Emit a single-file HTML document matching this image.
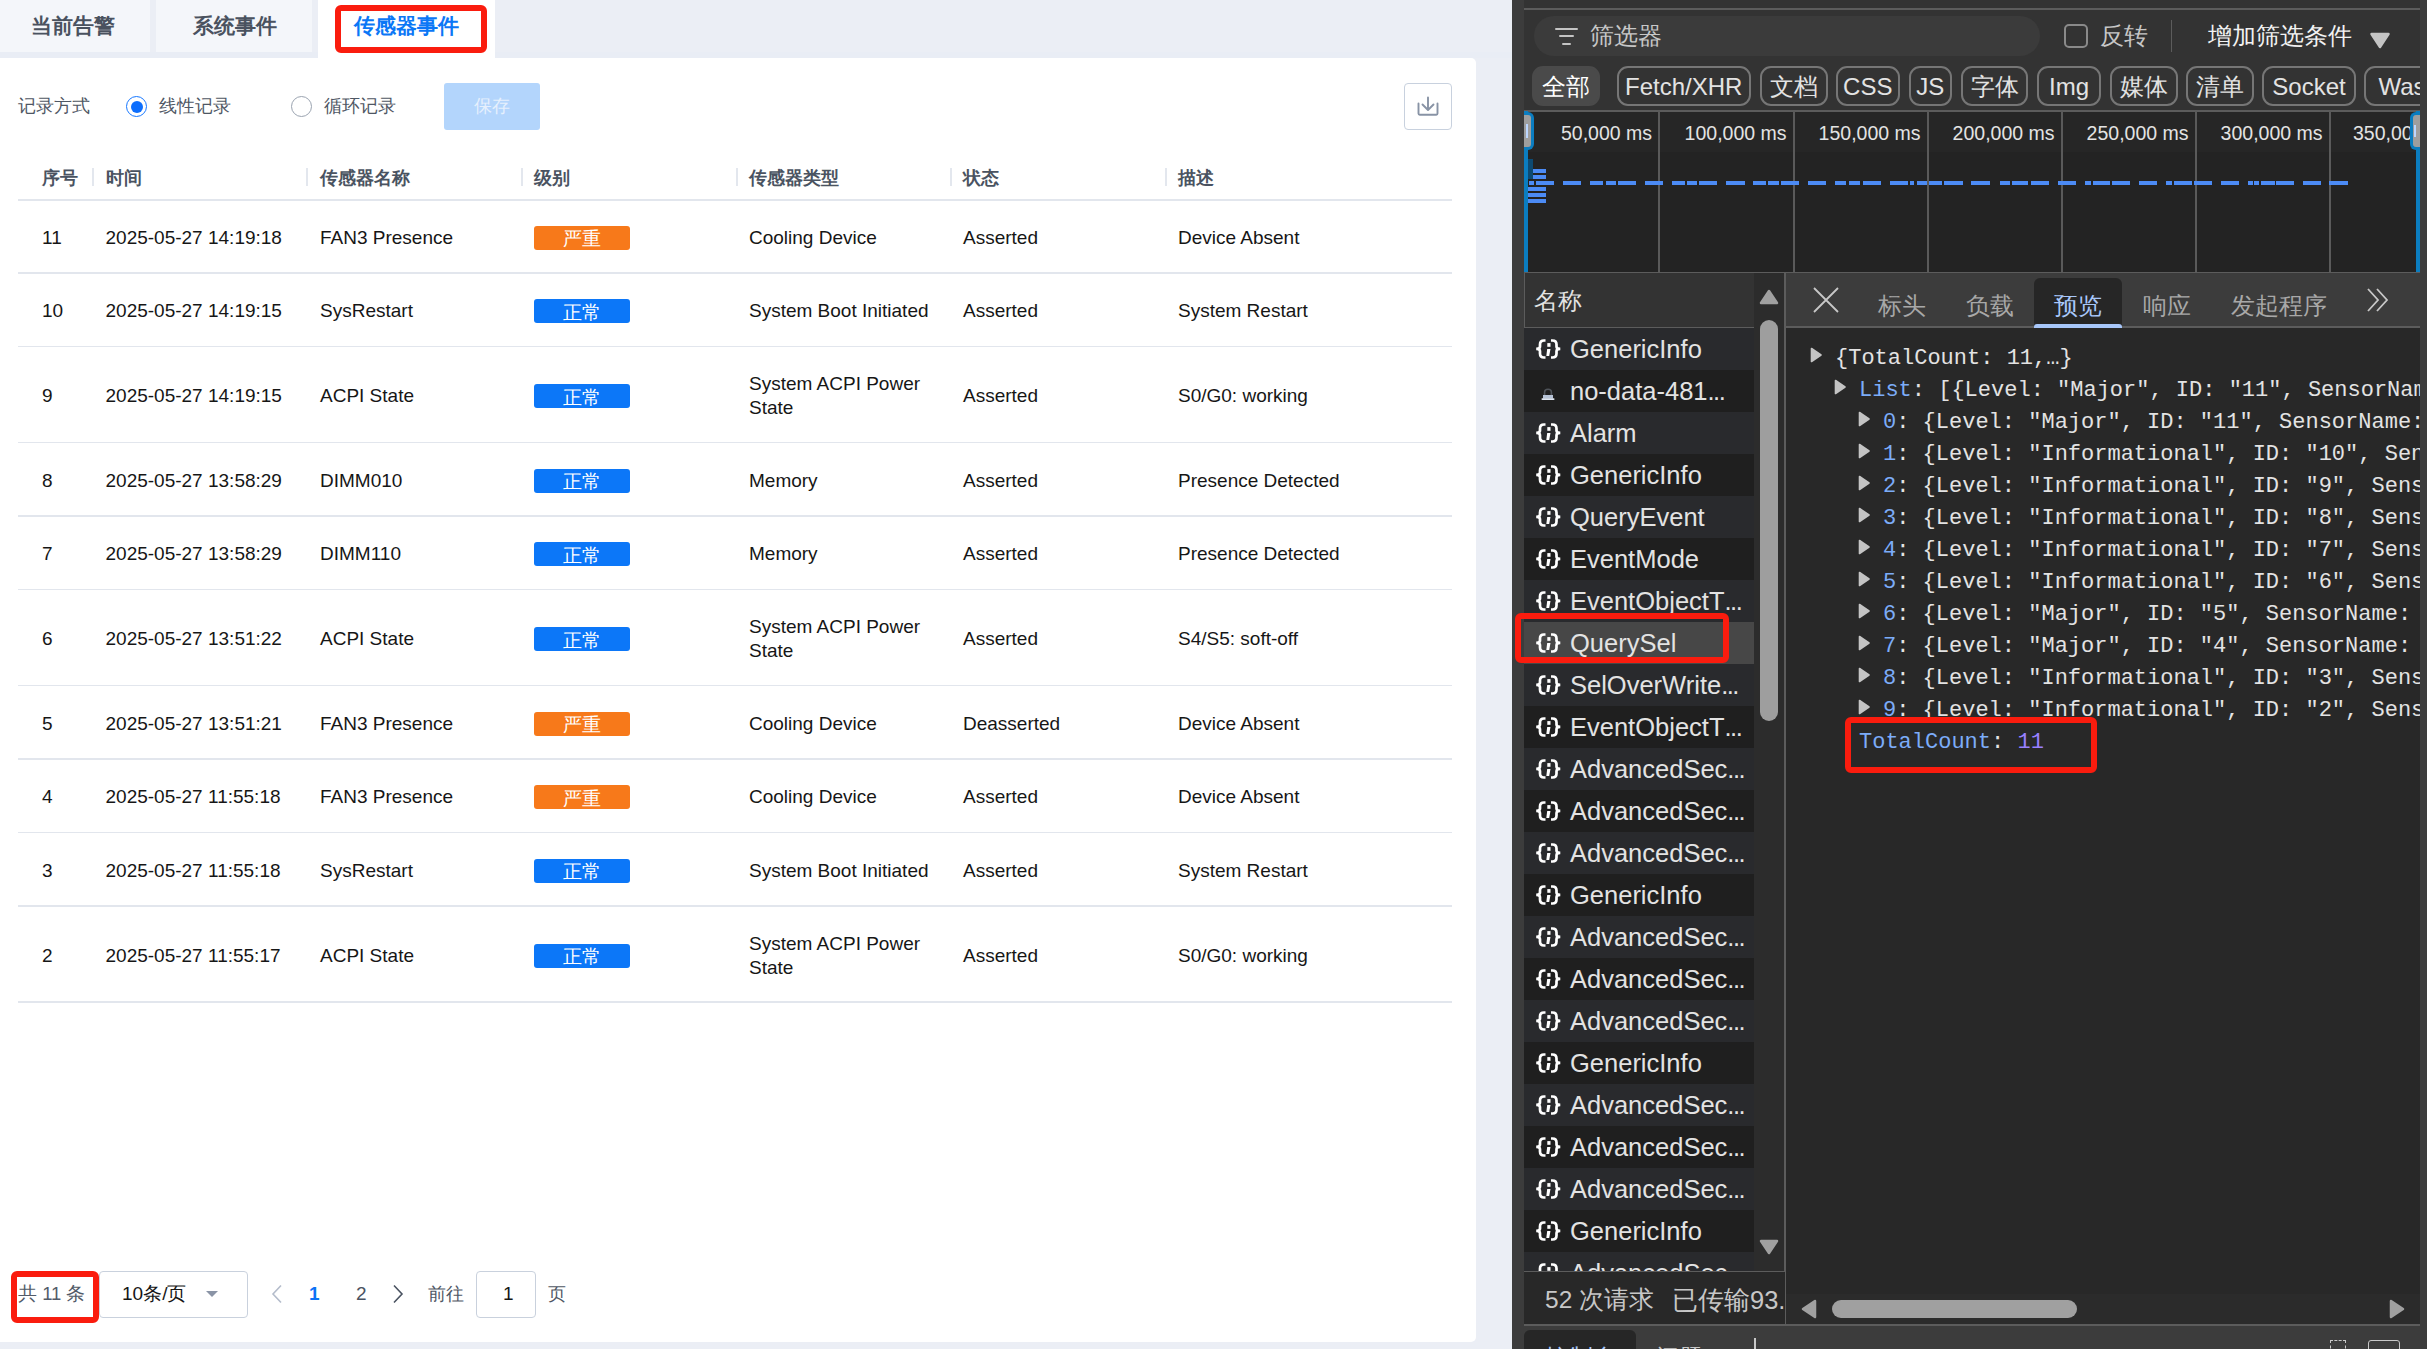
<!DOCTYPE html>
<html><head><meta charset="utf-8">
<style>
*{box-sizing:border-box;margin:0;padding:0}
html,body{width:2427px;height:1349px;overflow:hidden;background:#ebeef5;font-family:"Liberation Sans",sans-serif}
.a{position:absolute;white-space:nowrap}
#left{position:absolute;left:0;top:0;width:1512px;height:1349px;background:#ebeef5;overflow:hidden}
.tab{position:absolute;top:0;height:52px;background:#f4f6fa}
.tt{position:absolute;top:0;font-size:21px;font-weight:bold;color:#4a525f;line-height:52px;white-space:nowrap}
.card{position:absolute;left:0;top:58px;width:1476px;height:1284px;background:#fff;border-radius:0 5px 5px 0}
.redbox{position:absolute;border:6px solid #fa1c0e;border-radius:6px}
.th{position:absolute;top:162.5px;font-size:17.5px;font-weight:bold;color:#4a5361;line-height:30px;white-space:nowrap}
.sep{position:absolute;top:168px;width:2px;height:18px;background:#e3e7ee}
.hl{position:absolute;left:18px;width:1434px;height:1.5px;background:#e2e6ed}
.td{position:absolute;font-size:19px;color:#161616;line-height:24px;white-space:nowrap}
.badge{position:absolute;left:534px;width:96px;height:24px;border-radius:3px;color:#fff;font-size:19px;line-height:24px;text-align:center}
.or{background:#f7791a}.bl{background:#0c77f8}
#dev{position:absolute;left:1512px;top:0;width:915px;height:1349px;background:#3c3c3c;overflow:hidden}
.d{position:absolute;white-space:nowrap}
.chip{position:absolute;top:66px;height:40px;border:2px solid #767676;border-radius:11px;color:#e3e3e3;font-size:24px;line-height:37px;text-align:center;white-space:nowrap}
.gl{position:absolute;top:111px;width:2px;height:161px;background:#5a5a5a}
.rl{position:absolute;top:120.5px;font-size:19.5px;color:#e3e3e3;line-height:24px;white-space:nowrap;text-align:right}
.nr{position:absolute;left:12px;width:230px;height:42px;color:#e3e3e3;font-size:25.5px;line-height:42px;white-space:nowrap}
.ic{position:absolute;left:10px;top:0;font-family:"Liberation Mono",monospace;font-weight:bold;font-size:22px;color:#fff;letter-spacing:-3px}
.nt{position:absolute;left:46px;top:0}
.jl{position:absolute;font-family:"Liberation Mono",monospace;font-size:22px;color:#e3e3e3;line-height:32px;white-space:nowrap}
.tri{position:absolute;width:14px;height:18px}
.k{color:#7cacf8}.p{color:#9980ff}
</style></head><body>
<div id="left">
<div class="tab" style="left:0;width:150px"><span class="tt" style="left:31px">当前告警</span></div>
<div class="tab" style="left:156px;width:156px"><span class="tt" style="left:37px">系统事件</span></div>
<div class="a" style="left:0;top:52px;width:1512px;height:6px;background:#e9edf5"></div>
<div class="a" style="left:318px;top:0;width:177px;height:60px;background:#fff"></div>
<div class="card"></div>
<span class="tt" style="left:354px;color:#0b77f6">传感器事件</span>
<div class="redbox" style="left:335px;top:5px;width:152px;height:48px"></div>
<span class="a" style="left:18px;top:94px;font-size:17.5px;line-height:24px;color:#4f5764">记录方式</span>
<div class="a" style="left:126px;top:96px;width:21px;height:21px;border:1.5px solid #1677ff;border-radius:50%"></div>
<div class="a" style="left:130.5px;top:100.5px;width:12px;height:12px;background:#0d6efd;border-radius:50%"></div>
<span class="a" style="left:159px;top:94px;font-size:17.5px;line-height:24px;color:#4f5764">线性记录</span>
<div class="a" style="left:291px;top:96px;width:21px;height:21px;border:1.5px solid #9aa3b0;border-radius:50%"></div>
<span class="a" style="left:324px;top:94px;font-size:17.5px;line-height:24px;color:#4f5764">循环记录</span>
<div class="a" style="left:444px;top:83px;width:96px;height:47px;background:#b3d5fc;border-radius:3px"></div>
<span class="a" style="left:474px;top:94px;font-size:17.5px;line-height:24px;color:#e6f0fd">保存</span>
<div class="a" style="left:1404px;top:83px;width:48px;height:47px;border:1.5px solid #c8d1de;border-radius:4px"></div>
<svg class="a" style="left:1412px;top:92px" width="32" height="30" viewBox="0 0 32 30"><path d="M16 5.5V17.5M10.5 12.5L16 18L21.5 12.5" stroke="#8893a5" stroke-width="1.9" fill="none" stroke-linecap="round" stroke-linejoin="round"/><path d="M6.5 11.5V21.5Q6.5 22.7 7.7 22.7H24.3Q25.5 22.7 25.5 21.5V11.5" stroke="#8893a5" stroke-width="1.9" fill="none" stroke-linecap="round"/></svg>
<span class="th" style="left:42px">序号</span>
<span class="th" style="left:105.5px">时间</span>
<span class="th" style="left:320px">传感器名称</span>
<span class="th" style="left:534px">级别</span>
<span class="th" style="left:749px">传感器类型</span>
<span class="th" style="left:963px">状态</span>
<span class="th" style="left:1178px">描述</span>
<div class="sep" style="left:92px"></div>
<div class="sep" style="left:306px"></div>
<div class="sep" style="left:521px"></div>
<div class="sep" style="left:736px"></div>
<div class="sep" style="left:950px"></div>
<div class="sep" style="left:1165px"></div>
<div class="hl" style="top:199px"></div>
<span class="td" style="left:42px;top:225.8px">11</span>
<span class="td" style="left:105.5px;top:225.8px">2025-05-27 14:19:18</span>
<span class="td" style="left:320px;top:225.8px">FAN3 Presence</span>
<span class="td" style="left:963px;top:225.8px">Asserted</span>
<span class="td" style="left:1178px;top:225.8px">Device Absent</span>
<span class="td" style="left:749px;top:225.8px">Cooling Device</span>
<div class="badge or" style="top:225.8px"><span style="position:relative;top:1.5px">严重</span></div>
<div class="hl" style="top:272.0px"></div>
<span class="td" style="left:42px;top:299.2px">10</span>
<span class="td" style="left:105.5px;top:299.2px">2025-05-27 14:19:15</span>
<span class="td" style="left:320px;top:299.2px">SysRestart</span>
<span class="td" style="left:963px;top:299.2px">Asserted</span>
<span class="td" style="left:1178px;top:299.2px">System Restart</span>
<span class="td" style="left:749px;top:299.2px">System Boot Initiated</span>
<div class="badge bl" style="top:299.2px"><span style="position:relative;top:1.5px">正常</span></div>
<div class="hl" style="top:345.5px"></div>
<span class="td" style="left:42px;top:384.0px">9</span>
<span class="td" style="left:105.5px;top:384.0px">2025-05-27 14:19:15</span>
<span class="td" style="left:320px;top:384.0px">ACPI State</span>
<span class="td" style="left:963px;top:384.0px">Asserted</span>
<span class="td" style="left:1178px;top:384.0px">S0/G0: working</span>
<span class="td" style="left:749px;top:372.0px">System ACPI Power<br>State</span>
<div class="badge bl" style="top:384.0px"><span style="position:relative;top:1.5px">正常</span></div>
<div class="hl" style="top:441.5px"></div>
<span class="td" style="left:42px;top:468.8px">8</span>
<span class="td" style="left:105.5px;top:468.8px">2025-05-27 13:58:29</span>
<span class="td" style="left:320px;top:468.8px">DIMM010</span>
<span class="td" style="left:963px;top:468.8px">Asserted</span>
<span class="td" style="left:1178px;top:468.8px">Presence Detected</span>
<span class="td" style="left:749px;top:468.8px">Memory</span>
<div class="badge bl" style="top:468.8px"><span style="position:relative;top:1.5px">正常</span></div>
<div class="hl" style="top:515.0px"></div>
<span class="td" style="left:42px;top:542.2px">7</span>
<span class="td" style="left:105.5px;top:542.2px">2025-05-27 13:58:29</span>
<span class="td" style="left:320px;top:542.2px">DIMM110</span>
<span class="td" style="left:963px;top:542.2px">Asserted</span>
<span class="td" style="left:1178px;top:542.2px">Presence Detected</span>
<span class="td" style="left:749px;top:542.2px">Memory</span>
<div class="badge bl" style="top:542.2px"><span style="position:relative;top:1.5px">正常</span></div>
<div class="hl" style="top:588.5px"></div>
<span class="td" style="left:42px;top:627.0px">6</span>
<span class="td" style="left:105.5px;top:627.0px">2025-05-27 13:51:22</span>
<span class="td" style="left:320px;top:627.0px">ACPI State</span>
<span class="td" style="left:963px;top:627.0px">Asserted</span>
<span class="td" style="left:1178px;top:627.0px">S4/S5: soft-off</span>
<span class="td" style="left:749px;top:615.0px">System ACPI Power<br>State</span>
<div class="badge bl" style="top:627.0px"><span style="position:relative;top:1.5px">正常</span></div>
<div class="hl" style="top:684.5px"></div>
<span class="td" style="left:42px;top:711.8px">5</span>
<span class="td" style="left:105.5px;top:711.8px">2025-05-27 13:51:21</span>
<span class="td" style="left:320px;top:711.8px">FAN3 Presence</span>
<span class="td" style="left:963px;top:711.8px">Deasserted</span>
<span class="td" style="left:1178px;top:711.8px">Device Absent</span>
<span class="td" style="left:749px;top:711.8px">Cooling Device</span>
<div class="badge or" style="top:711.8px"><span style="position:relative;top:1.5px">严重</span></div>
<div class="hl" style="top:758.0px"></div>
<span class="td" style="left:42px;top:785.2px">4</span>
<span class="td" style="left:105.5px;top:785.2px">2025-05-27 11:55:18</span>
<span class="td" style="left:320px;top:785.2px">FAN3 Presence</span>
<span class="td" style="left:963px;top:785.2px">Asserted</span>
<span class="td" style="left:1178px;top:785.2px">Device Absent</span>
<span class="td" style="left:749px;top:785.2px">Cooling Device</span>
<div class="badge or" style="top:785.2px"><span style="position:relative;top:1.5px">严重</span></div>
<div class="hl" style="top:831.5px"></div>
<span class="td" style="left:42px;top:858.8px">3</span>
<span class="td" style="left:105.5px;top:858.8px">2025-05-27 11:55:18</span>
<span class="td" style="left:320px;top:858.8px">SysRestart</span>
<span class="td" style="left:963px;top:858.8px">Asserted</span>
<span class="td" style="left:1178px;top:858.8px">System Restart</span>
<span class="td" style="left:749px;top:858.8px">System Boot Initiated</span>
<div class="badge bl" style="top:858.8px"><span style="position:relative;top:1.5px">正常</span></div>
<div class="hl" style="top:905.0px"></div>
<span class="td" style="left:42px;top:943.5px">2</span>
<span class="td" style="left:105.5px;top:943.5px">2025-05-27 11:55:17</span>
<span class="td" style="left:320px;top:943.5px">ACPI State</span>
<span class="td" style="left:963px;top:943.5px">Asserted</span>
<span class="td" style="left:1178px;top:943.5px">S0/G0: working</span>
<span class="td" style="left:749px;top:931.5px">System ACPI Power<br>State</span>
<div class="badge bl" style="top:943.5px"><span style="position:relative;top:1.5px">正常</span></div>
<div class="hl" style="top:1001.0px"></div>
<span class="a" style="left:18px;top:1282px;font-size:18.5px;line-height:24px;color:#525b68">共 11 条</span>
<div class="a" style="left:99px;top:1270.5px;width:149px;height:47px;border:1.5px solid #c9d1dd;border-radius:4px"></div>
<span class="a" style="left:122px;top:1282px;font-size:19px;line-height:24px;color:#161616">10条/页</span>
<div class="a" style="left:206px;top:1291px;width:0;height:0;border-left:6px solid transparent;border-right:6px solid transparent;border-top:6px solid #8a94a6"></div>
<svg class="a" style="left:270px;top:1284px" width="14" height="20"><path d="M11 1.5L3 10L11 18.5" stroke="#b4bccb" stroke-width="1.6" fill="none"/></svg>
<span class="a" style="left:309px;top:1282px;font-size:19px;line-height:24px;color:#0b72f5;font-weight:bold">1</span>
<span class="a" style="left:356px;top:1282px;font-size:19px;line-height:24px;color:#4a5361">2</span>
<svg class="a" style="left:391px;top:1284px" width="14" height="20"><path d="M3 1.5L11 10L3 18.5" stroke="#4a5361" stroke-width="1.6" fill="none"/></svg>
<span class="a" style="left:428px;top:1282px;font-size:17.5px;line-height:24px;color:#4f5764">前往</span>
<div class="a" style="left:476px;top:1270.5px;width:60px;height:47px;border:1.5px solid #c9d1dd;border-radius:4px"></div>
<span class="a" style="left:503px;top:1282px;font-size:19px;line-height:24px;color:#161616">1</span>
<span class="a" style="left:548px;top:1282px;font-size:17.5px;line-height:24px;color:#4f5764">页</span>
<div class="redbox" style="left:11px;top:1271px;width:88px;height:52px"></div>
</div>
<div id="dev">
<div class="d" style="left:12px;top:0;width:896px;height:110px;background:#333333"></div>
<div class="d" style="left:12px;top:8px;width:896px;height:2px;background:#5c5c5c"></div>
<div class="d" style="left:22px;top:16px;width:506px;height:40px;background:#3b3b3b;border-radius:20px"></div>
<div class="d" style="left:43px;top:27.5px;width:22.5px;height:2px;background:#c4c4c4;border-radius:1px"></div>
<div class="d" style="left:46.5px;top:35px;width:15.5px;height:2px;background:#c4c4c4;border-radius:1px"></div>
<div class="d" style="left:49.5px;top:42.5px;width:9.5px;height:2px;background:#c4c4c4;border-radius:1px"></div>
<span class="d" style="left:78px;top:22px;font-size:24px;line-height:28px;color:#c7c7c7">筛选器</span>
<div class="d" style="left:552px;top:24px;width:24px;height:24px;border:2px solid #8a8a8a;border-radius:5px"></div>
<span class="d" style="left:588px;top:22px;font-size:24px;line-height:28px;color:#c7c7c7">反转</span>
<div class="d" style="left:658.5px;top:20px;width:1.5px;height:32px;background:#5c5c5c"></div>
<span class="d" style="left:696px;top:22px;font-size:24px;line-height:28px;color:#f2f2f2">增加筛选条件</span>
<svg class="d" style="left:856px;top:31px" width="24" height="19" viewBox="0 0 24 19"><path d="M3.5 3H20.5L12 16Z" fill="#c4c4c4" stroke="#c4c4c4" stroke-width="2.5" stroke-linejoin="round"/></svg>
<div class="chip" style="left:20px;width:68px;background:#4a4a4a;border-color:#4a4a4a;color:#fff">全部</div>
<div class="chip" style="left:104.5px;width:134.5px">Fetch/XHR</div>
<div class="chip" style="left:248px;width:67.5px">文档</div>
<div class="chip" style="left:324px;width:63.5px">CSS</div>
<div class="chip" style="left:396.5px;width:43.5px">JS</div>
<div class="chip" style="left:449px;width:67px">字体</div>
<div class="chip" style="left:525px;width:64px">Img</div>
<div class="chip" style="left:598px;width:67.5px">媒体</div>
<div class="chip" style="left:674px;width:67.5px">清单</div>
<div class="chip" style="left:750px;width:94px">Socket</div>
<div class="chip" style="left:852px;width:96px">Wasm</div>
<div class="d" style="left:908px;top:0;width:7px;height:1349px;background:#3c3c3c;z-index:5"></div>
<div class="d" style="left:12px;top:109.5px;width:896px;height:2px;background:#5c5c5c"></div>
<div class="d" style="left:12px;top:111.5px;width:896px;height:40.5px;background:#262626"></div>
<div class="d" style="left:12px;top:152px;width:896px;height:120px;background:#232323"></div>
<div class="d" style="left:12px;top:271.5px;width:896px;height:2px;background:#5c5c5c"></div>
<div class="gl" style="left:146px"></div>
<span class="rl" style="left:-54px;width:194px">50,000 ms</span>
<div class="gl" style="left:280.5px"></div>
<span class="rl" style="left:80.5px;width:194px">100,000 ms</span>
<div class="gl" style="left:414.5px"></div>
<span class="rl" style="left:214.5px;width:194px">150,000 ms</span>
<div class="gl" style="left:548.5px"></div>
<span class="rl" style="left:348.5px;width:194px">200,000 ms</span>
<div class="gl" style="left:682.5px"></div>
<span class="rl" style="left:482.5px;width:194px">250,000 ms</span>
<div class="gl" style="left:816.5px"></div>
<span class="rl" style="left:616.5px;width:194px">300,000 ms</span>
<span class="rl" style="left:841px">350,000 ms</span>
<div class="d" style="left:16.5px;top:181px;width:5.7px;height:4px;background:#4c8bf5"></div>
<div class="d" style="left:24.1px;top:181px;width:18.0px;height:4px;background:#4c8bf5"></div>
<div class="d" style="left:50.6px;top:181px;width:18.6px;height:4px;background:#4c8bf5"></div>
<div class="d" style="left:78.1px;top:181px;width:13.3px;height:4px;background:#4c8bf5"></div>
<div class="d" style="left:93.9px;top:181px;width:9.8px;height:4px;background:#4c8bf5"></div>
<div class="d" style="left:105.6px;top:181px;width:18.0px;height:4px;background:#4c8bf5"></div>
<div class="d" style="left:132.5px;top:181px;width:18.6px;height:4px;background:#4c8bf5"></div>
<div class="d" style="left:160.0px;top:181px;width:12.5px;height:4px;background:#4c8bf5"></div>
<div class="d" style="left:174.8px;top:181px;width:10.4px;height:4px;background:#4c8bf5"></div>
<div class="d" style="left:187.1px;top:181px;width:18.4px;height:4px;background:#4c8bf5"></div>
<div class="d" style="left:214.0px;top:181px;width:18.6px;height:4px;background:#4c8bf5"></div>
<div class="d" style="left:241.1px;top:181px;width:12.7px;height:4px;background:#4c8bf5"></div>
<div class="d" style="left:255.9px;top:181px;width:10.8px;height:4px;background:#4c8bf5"></div>
<div class="d" style="left:268.6px;top:181px;width:18.4px;height:4px;background:#4c8bf5"></div>
<div class="d" style="left:295.5px;top:181px;width:18.6px;height:4px;background:#4c8bf5"></div>
<div class="d" style="left:323.0px;top:181px;width:11.4px;height:4px;background:#4c8bf5"></div>
<div class="d" style="left:336.8px;top:181px;width:11.4px;height:4px;background:#4c8bf5"></div>
<div class="d" style="left:350.7px;top:181px;width:18.4px;height:4px;background:#4c8bf5"></div>
<div class="d" style="left:377.6px;top:181px;width:18.0px;height:4px;background:#4c8bf5"></div>
<div class="d" style="left:397.5px;top:181px;width:4.7px;height:4px;background:#4c8bf5"></div>
<div class="d" style="left:404.7px;top:181px;width:10.8px;height:4px;background:#4c8bf5"></div>
<div class="d" style="left:417.4px;top:181px;width:12.9px;height:4px;background:#4c8bf5"></div>
<div class="d" style="left:432.2px;top:181px;width:18.4px;height:4px;background:#4c8bf5"></div>
<div class="d" style="left:459.0px;top:181px;width:18.8px;height:4px;background:#4c8bf5"></div>
<div class="d" style="left:488.4px;top:181px;width:9.2px;height:4px;background:#4c8bf5"></div>
<div class="d" style="left:500.0px;top:181px;width:16.3px;height:4px;background:#4c8bf5"></div>
<div class="d" style="left:518.8px;top:181px;width:18.1px;height:4px;background:#4c8bf5"></div>
<div class="d" style="left:545.7px;top:181px;width:18.3px;height:4px;background:#4c8bf5"></div>
<div class="d" style="left:572.7px;top:181px;width:6.1px;height:4px;background:#4c8bf5"></div>
<div class="d" style="left:580.8px;top:181px;width:17.3px;height:4px;background:#4c8bf5"></div>
<div class="d" style="left:600.0px;top:181px;width:18.3px;height:4px;background:#4c8bf5"></div>
<div class="d" style="left:627.0px;top:181px;width:18.2px;height:4px;background:#4c8bf5"></div>
<div class="d" style="left:654.3px;top:181px;width:5.4px;height:4px;background:#4c8bf5"></div>
<div class="d" style="left:661.6px;top:181px;width:18.3px;height:4px;background:#4c8bf5"></div>
<div class="d" style="left:681.8px;top:181px;width:18.3px;height:4px;background:#4c8bf5"></div>
<div class="d" style="left:708.7px;top:181px;width:18.3px;height:4px;background:#4c8bf5"></div>
<div class="d" style="left:736.0px;top:181px;width:4.5px;height:4px;background:#4c8bf5"></div>
<div class="d" style="left:742.4px;top:181px;width:4.4px;height:4px;background:#4c8bf5"></div>
<div class="d" style="left:748.6px;top:181px;width:14.0px;height:4px;background:#4c8bf5"></div>
<div class="d" style="left:764.1px;top:181px;width:17.7px;height:4px;background:#4c8bf5"></div>
<div class="d" style="left:790.5px;top:181px;width:18.3px;height:4px;background:#4c8bf5"></div>
<div class="d" style="left:817.4px;top:181px;width:18.9px;height:4px;background:#4c8bf5"></div>
<div class="d" style="left:16px;top:159px;width:5px;height:20px;background:#0d4a72"></div>
<div class="d" style="left:21px;top:169px;width:13.2px;height:4px;background:#4c8bf5"></div>
<div class="d" style="left:21px;top:174.7px;width:13.2px;height:4px;background:#4c8bf5"></div>
<div class="d" style="left:16px;top:187.4px;width:18.2px;height:4px;background:#4c8bf5"></div>
<div class="d" style="left:16px;top:193.1px;width:18.2px;height:4px;background:#4c8bf5"></div>
<div class="d" style="left:16px;top:198.8px;width:18.2px;height:4px;background:#4c8bf5"></div>
<div class="d" style="left:12px;top:111px;width:4px;height:161px;background:#0b7dc0"></div>
<div class="d" style="left:904px;top:111px;width:4px;height:161px;background:#0b7dc0"></div>
<div class="d" style="left:12px;top:112px;width:10px;height:38px;background:#9e9e9e;border:3px solid #0b7dc0;border-left:0;border-radius:0 6px 6px 0"></div>
<div class="d" style="left:14px;top:124px;width:2px;height:14px;background:#bcd6ff"></div>
<div class="d" style="left:898px;top:112px;width:10px;height:38px;background:#9e9e9e;border:3px solid #0b7dc0;border-right:0;border-radius:6px 0 0 6px;z-index:6"></div>
<div class="d" style="left:902px;top:125px;width:2px;height:12px;background:#bcd6ff;z-index:6"></div>
<div class="d" style="left:12px;top:273px;width:896px;height:1052px;background:#282828"></div>
<div class="d" style="left:12px;top:273px;width:230px;height:55px;background:#333;border-left:1.5px solid #5c5c5c;border-bottom:1.5px solid #5c5c5c"></div>
<span class="d" style="left:22px;top:287px;font-size:24px;line-height:28px;color:#e3e3e3">名称</span>
<div class="d" style="left:242px;top:273px;width:31px;height:998px;background:#2c2c2c"></div>
<svg class="d" style="left:246px;top:288px" width="22" height="18" viewBox="0 0 22 18"><path d="M3 15L11 3L19 15Z" fill="#a0a0a0" stroke="#a0a0a0" stroke-width="2.5" stroke-linejoin="round"/></svg>
<div class="d" style="left:247.5px;top:319.5px;width:18.5px;height:401px;background:#9e9e9e;border-radius:9px"></div>
<svg class="d" style="left:246px;top:1238px" width="22" height="18" viewBox="0 0 22 18"><path d="M3 3L19 3L11 15Z" fill="#a0a0a0" stroke="#a0a0a0" stroke-width="2.5" stroke-linejoin="round"/></svg>
<div class="d" style="left:272px;top:273px;width:2px;height:1052px;background:#5c5c5c"></div>
<div class="d" style="left:12px;top:328px;width:230px;height:943px;overflow:hidden">
<div class="nr" style="left:0;top:0px;width:230px;background:#292a2d"><svg style="position:absolute;left:10.5px;top:10px" width="27" height="22" viewBox="0 0 27 22"><path d="M10.5 2.5H9Q5 2.5 5 6.5V8.5Q5 10.9 1.2 10.9Q5 10.9 5 13.3V15.5Q5 19.5 9 19.5H10.5M16 2.5H17.5Q21.5 2.5 21.5 6.5V8.5Q21.5 10.9 25.3 10.9Q21.5 10.9 21.5 13.3V15.5Q21.5 19.5 17.5 19.5H16" stroke="#fff" stroke-width="2.7" fill="none"/><rect x="12.3" y="5.1" width="3.2" height="3.7" fill="#fff"/><path d="M12.2 11.1H15.5L14.2 18H11.3Z" fill="#fff"/></svg><span class="nt">GenericInfo</span></div>
<div class="nr" style="left:0;top:42px;width:230px;background:#1f1f1f"><svg style="position:absolute;left:17px;top:18px" width="14" height="13" viewBox="0 0 14 13"><path d="M3.6 8V4Q3.6 1.3 7 1.3Q10.4 1.3 10.4 4V8" stroke="#4f5359" stroke-width="1.6" fill="none"/><rect x="2" y="7" width="10" height="3.6" fill="#b6c2d6"/><rect x="0.5" y="10.3" width="13" height="1.8" rx="0.8" fill="#dfe6f1"/></svg><span class="nt">no-data-481<span style="letter-spacing:-1.5px">...</span></span></div>
<div class="nr" style="left:0;top:84px;width:230px;background:#292a2d"><svg style="position:absolute;left:10.5px;top:10px" width="27" height="22" viewBox="0 0 27 22"><path d="M10.5 2.5H9Q5 2.5 5 6.5V8.5Q5 10.9 1.2 10.9Q5 10.9 5 13.3V15.5Q5 19.5 9 19.5H10.5M16 2.5H17.5Q21.5 2.5 21.5 6.5V8.5Q21.5 10.9 25.3 10.9Q21.5 10.9 21.5 13.3V15.5Q21.5 19.5 17.5 19.5H16" stroke="#fff" stroke-width="2.7" fill="none"/><rect x="12.3" y="5.1" width="3.2" height="3.7" fill="#fff"/><path d="M12.2 11.1H15.5L14.2 18H11.3Z" fill="#fff"/></svg><span class="nt">Alarm</span></div>
<div class="nr" style="left:0;top:126px;width:230px;background:#1f1f1f"><svg style="position:absolute;left:10.5px;top:10px" width="27" height="22" viewBox="0 0 27 22"><path d="M10.5 2.5H9Q5 2.5 5 6.5V8.5Q5 10.9 1.2 10.9Q5 10.9 5 13.3V15.5Q5 19.5 9 19.5H10.5M16 2.5H17.5Q21.5 2.5 21.5 6.5V8.5Q21.5 10.9 25.3 10.9Q21.5 10.9 21.5 13.3V15.5Q21.5 19.5 17.5 19.5H16" stroke="#fff" stroke-width="2.7" fill="none"/><rect x="12.3" y="5.1" width="3.2" height="3.7" fill="#fff"/><path d="M12.2 11.1H15.5L14.2 18H11.3Z" fill="#fff"/></svg><span class="nt">GenericInfo</span></div>
<div class="nr" style="left:0;top:168px;width:230px;background:#292a2d"><svg style="position:absolute;left:10.5px;top:10px" width="27" height="22" viewBox="0 0 27 22"><path d="M10.5 2.5H9Q5 2.5 5 6.5V8.5Q5 10.9 1.2 10.9Q5 10.9 5 13.3V15.5Q5 19.5 9 19.5H10.5M16 2.5H17.5Q21.5 2.5 21.5 6.5V8.5Q21.5 10.9 25.3 10.9Q21.5 10.9 21.5 13.3V15.5Q21.5 19.5 17.5 19.5H16" stroke="#fff" stroke-width="2.7" fill="none"/><rect x="12.3" y="5.1" width="3.2" height="3.7" fill="#fff"/><path d="M12.2 11.1H15.5L14.2 18H11.3Z" fill="#fff"/></svg><span class="nt">QueryEvent</span></div>
<div class="nr" style="left:0;top:210px;width:230px;background:#1f1f1f"><svg style="position:absolute;left:10.5px;top:10px" width="27" height="22" viewBox="0 0 27 22"><path d="M10.5 2.5H9Q5 2.5 5 6.5V8.5Q5 10.9 1.2 10.9Q5 10.9 5 13.3V15.5Q5 19.5 9 19.5H10.5M16 2.5H17.5Q21.5 2.5 21.5 6.5V8.5Q21.5 10.9 25.3 10.9Q21.5 10.9 21.5 13.3V15.5Q21.5 19.5 17.5 19.5H16" stroke="#fff" stroke-width="2.7" fill="none"/><rect x="12.3" y="5.1" width="3.2" height="3.7" fill="#fff"/><path d="M12.2 11.1H15.5L14.2 18H11.3Z" fill="#fff"/></svg><span class="nt">EventMode</span></div>
<div class="nr" style="left:0;top:252px;width:230px;background:#292a2d"><svg style="position:absolute;left:10.5px;top:10px" width="27" height="22" viewBox="0 0 27 22"><path d="M10.5 2.5H9Q5 2.5 5 6.5V8.5Q5 10.9 1.2 10.9Q5 10.9 5 13.3V15.5Q5 19.5 9 19.5H10.5M16 2.5H17.5Q21.5 2.5 21.5 6.5V8.5Q21.5 10.9 25.3 10.9Q21.5 10.9 21.5 13.3V15.5Q21.5 19.5 17.5 19.5H16" stroke="#fff" stroke-width="2.7" fill="none"/><rect x="12.3" y="5.1" width="3.2" height="3.7" fill="#fff"/><path d="M12.2 11.1H15.5L14.2 18H11.3Z" fill="#fff"/></svg><span class="nt">EventObjectT<span style="letter-spacing:-1.5px">...</span></span></div>
<div class="nr" style="left:0;top:294px;width:230px;background:#474747"><svg style="position:absolute;left:10.5px;top:10px" width="27" height="22" viewBox="0 0 27 22"><path d="M10.5 2.5H9Q5 2.5 5 6.5V8.5Q5 10.9 1.2 10.9Q5 10.9 5 13.3V15.5Q5 19.5 9 19.5H10.5M16 2.5H17.5Q21.5 2.5 21.5 6.5V8.5Q21.5 10.9 25.3 10.9Q21.5 10.9 21.5 13.3V15.5Q21.5 19.5 17.5 19.5H16" stroke="#fff" stroke-width="2.7" fill="none"/><rect x="12.3" y="5.1" width="3.2" height="3.7" fill="#fff"/><path d="M12.2 11.1H15.5L14.2 18H11.3Z" fill="#fff"/></svg><span class="nt">QuerySel</span></div>
<div class="nr" style="left:0;top:336px;width:230px;background:#292a2d"><svg style="position:absolute;left:10.5px;top:10px" width="27" height="22" viewBox="0 0 27 22"><path d="M10.5 2.5H9Q5 2.5 5 6.5V8.5Q5 10.9 1.2 10.9Q5 10.9 5 13.3V15.5Q5 19.5 9 19.5H10.5M16 2.5H17.5Q21.5 2.5 21.5 6.5V8.5Q21.5 10.9 25.3 10.9Q21.5 10.9 21.5 13.3V15.5Q21.5 19.5 17.5 19.5H16" stroke="#fff" stroke-width="2.7" fill="none"/><rect x="12.3" y="5.1" width="3.2" height="3.7" fill="#fff"/><path d="M12.2 11.1H15.5L14.2 18H11.3Z" fill="#fff"/></svg><span class="nt">SelOverWrite<span style="letter-spacing:-1.5px">...</span></span></div>
<div class="nr" style="left:0;top:378px;width:230px;background:#1f1f1f"><svg style="position:absolute;left:10.5px;top:10px" width="27" height="22" viewBox="0 0 27 22"><path d="M10.5 2.5H9Q5 2.5 5 6.5V8.5Q5 10.9 1.2 10.9Q5 10.9 5 13.3V15.5Q5 19.5 9 19.5H10.5M16 2.5H17.5Q21.5 2.5 21.5 6.5V8.5Q21.5 10.9 25.3 10.9Q21.5 10.9 21.5 13.3V15.5Q21.5 19.5 17.5 19.5H16" stroke="#fff" stroke-width="2.7" fill="none"/><rect x="12.3" y="5.1" width="3.2" height="3.7" fill="#fff"/><path d="M12.2 11.1H15.5L14.2 18H11.3Z" fill="#fff"/></svg><span class="nt">EventObjectT<span style="letter-spacing:-1.5px">...</span></span></div>
<div class="nr" style="left:0;top:420px;width:230px;background:#292a2d"><svg style="position:absolute;left:10.5px;top:10px" width="27" height="22" viewBox="0 0 27 22"><path d="M10.5 2.5H9Q5 2.5 5 6.5V8.5Q5 10.9 1.2 10.9Q5 10.9 5 13.3V15.5Q5 19.5 9 19.5H10.5M16 2.5H17.5Q21.5 2.5 21.5 6.5V8.5Q21.5 10.9 25.3 10.9Q21.5 10.9 21.5 13.3V15.5Q21.5 19.5 17.5 19.5H16" stroke="#fff" stroke-width="2.7" fill="none"/><rect x="12.3" y="5.1" width="3.2" height="3.7" fill="#fff"/><path d="M12.2 11.1H15.5L14.2 18H11.3Z" fill="#fff"/></svg><span class="nt">AdvancedSec<span style="letter-spacing:-1.5px">...</span></span></div>
<div class="nr" style="left:0;top:462px;width:230px;background:#1f1f1f"><svg style="position:absolute;left:10.5px;top:10px" width="27" height="22" viewBox="0 0 27 22"><path d="M10.5 2.5H9Q5 2.5 5 6.5V8.5Q5 10.9 1.2 10.9Q5 10.9 5 13.3V15.5Q5 19.5 9 19.5H10.5M16 2.5H17.5Q21.5 2.5 21.5 6.5V8.5Q21.5 10.9 25.3 10.9Q21.5 10.9 21.5 13.3V15.5Q21.5 19.5 17.5 19.5H16" stroke="#fff" stroke-width="2.7" fill="none"/><rect x="12.3" y="5.1" width="3.2" height="3.7" fill="#fff"/><path d="M12.2 11.1H15.5L14.2 18H11.3Z" fill="#fff"/></svg><span class="nt">AdvancedSec<span style="letter-spacing:-1.5px">...</span></span></div>
<div class="nr" style="left:0;top:504px;width:230px;background:#292a2d"><svg style="position:absolute;left:10.5px;top:10px" width="27" height="22" viewBox="0 0 27 22"><path d="M10.5 2.5H9Q5 2.5 5 6.5V8.5Q5 10.9 1.2 10.9Q5 10.9 5 13.3V15.5Q5 19.5 9 19.5H10.5M16 2.5H17.5Q21.5 2.5 21.5 6.5V8.5Q21.5 10.9 25.3 10.9Q21.5 10.9 21.5 13.3V15.5Q21.5 19.5 17.5 19.5H16" stroke="#fff" stroke-width="2.7" fill="none"/><rect x="12.3" y="5.1" width="3.2" height="3.7" fill="#fff"/><path d="M12.2 11.1H15.5L14.2 18H11.3Z" fill="#fff"/></svg><span class="nt">AdvancedSec<span style="letter-spacing:-1.5px">...</span></span></div>
<div class="nr" style="left:0;top:546px;width:230px;background:#1f1f1f"><svg style="position:absolute;left:10.5px;top:10px" width="27" height="22" viewBox="0 0 27 22"><path d="M10.5 2.5H9Q5 2.5 5 6.5V8.5Q5 10.9 1.2 10.9Q5 10.9 5 13.3V15.5Q5 19.5 9 19.5H10.5M16 2.5H17.5Q21.5 2.5 21.5 6.5V8.5Q21.5 10.9 25.3 10.9Q21.5 10.9 21.5 13.3V15.5Q21.5 19.5 17.5 19.5H16" stroke="#fff" stroke-width="2.7" fill="none"/><rect x="12.3" y="5.1" width="3.2" height="3.7" fill="#fff"/><path d="M12.2 11.1H15.5L14.2 18H11.3Z" fill="#fff"/></svg><span class="nt">GenericInfo</span></div>
<div class="nr" style="left:0;top:588px;width:230px;background:#292a2d"><svg style="position:absolute;left:10.5px;top:10px" width="27" height="22" viewBox="0 0 27 22"><path d="M10.5 2.5H9Q5 2.5 5 6.5V8.5Q5 10.9 1.2 10.9Q5 10.9 5 13.3V15.5Q5 19.5 9 19.5H10.5M16 2.5H17.5Q21.5 2.5 21.5 6.5V8.5Q21.5 10.9 25.3 10.9Q21.5 10.9 21.5 13.3V15.5Q21.5 19.5 17.5 19.5H16" stroke="#fff" stroke-width="2.7" fill="none"/><rect x="12.3" y="5.1" width="3.2" height="3.7" fill="#fff"/><path d="M12.2 11.1H15.5L14.2 18H11.3Z" fill="#fff"/></svg><span class="nt">AdvancedSec<span style="letter-spacing:-1.5px">...</span></span></div>
<div class="nr" style="left:0;top:630px;width:230px;background:#1f1f1f"><svg style="position:absolute;left:10.5px;top:10px" width="27" height="22" viewBox="0 0 27 22"><path d="M10.5 2.5H9Q5 2.5 5 6.5V8.5Q5 10.9 1.2 10.9Q5 10.9 5 13.3V15.5Q5 19.5 9 19.5H10.5M16 2.5H17.5Q21.5 2.5 21.5 6.5V8.5Q21.5 10.9 25.3 10.9Q21.5 10.9 21.5 13.3V15.5Q21.5 19.5 17.5 19.5H16" stroke="#fff" stroke-width="2.7" fill="none"/><rect x="12.3" y="5.1" width="3.2" height="3.7" fill="#fff"/><path d="M12.2 11.1H15.5L14.2 18H11.3Z" fill="#fff"/></svg><span class="nt">AdvancedSec<span style="letter-spacing:-1.5px">...</span></span></div>
<div class="nr" style="left:0;top:672px;width:230px;background:#292a2d"><svg style="position:absolute;left:10.5px;top:10px" width="27" height="22" viewBox="0 0 27 22"><path d="M10.5 2.5H9Q5 2.5 5 6.5V8.5Q5 10.9 1.2 10.9Q5 10.9 5 13.3V15.5Q5 19.5 9 19.5H10.5M16 2.5H17.5Q21.5 2.5 21.5 6.5V8.5Q21.5 10.9 25.3 10.9Q21.5 10.9 21.5 13.3V15.5Q21.5 19.5 17.5 19.5H16" stroke="#fff" stroke-width="2.7" fill="none"/><rect x="12.3" y="5.1" width="3.2" height="3.7" fill="#fff"/><path d="M12.2 11.1H15.5L14.2 18H11.3Z" fill="#fff"/></svg><span class="nt">AdvancedSec<span style="letter-spacing:-1.5px">...</span></span></div>
<div class="nr" style="left:0;top:714px;width:230px;background:#1f1f1f"><svg style="position:absolute;left:10.5px;top:10px" width="27" height="22" viewBox="0 0 27 22"><path d="M10.5 2.5H9Q5 2.5 5 6.5V8.5Q5 10.9 1.2 10.9Q5 10.9 5 13.3V15.5Q5 19.5 9 19.5H10.5M16 2.5H17.5Q21.5 2.5 21.5 6.5V8.5Q21.5 10.9 25.3 10.9Q21.5 10.9 21.5 13.3V15.5Q21.5 19.5 17.5 19.5H16" stroke="#fff" stroke-width="2.7" fill="none"/><rect x="12.3" y="5.1" width="3.2" height="3.7" fill="#fff"/><path d="M12.2 11.1H15.5L14.2 18H11.3Z" fill="#fff"/></svg><span class="nt">GenericInfo</span></div>
<div class="nr" style="left:0;top:756px;width:230px;background:#292a2d"><svg style="position:absolute;left:10.5px;top:10px" width="27" height="22" viewBox="0 0 27 22"><path d="M10.5 2.5H9Q5 2.5 5 6.5V8.5Q5 10.9 1.2 10.9Q5 10.9 5 13.3V15.5Q5 19.5 9 19.5H10.5M16 2.5H17.5Q21.5 2.5 21.5 6.5V8.5Q21.5 10.9 25.3 10.9Q21.5 10.9 21.5 13.3V15.5Q21.5 19.5 17.5 19.5H16" stroke="#fff" stroke-width="2.7" fill="none"/><rect x="12.3" y="5.1" width="3.2" height="3.7" fill="#fff"/><path d="M12.2 11.1H15.5L14.2 18H11.3Z" fill="#fff"/></svg><span class="nt">AdvancedSec<span style="letter-spacing:-1.5px">...</span></span></div>
<div class="nr" style="left:0;top:798px;width:230px;background:#1f1f1f"><svg style="position:absolute;left:10.5px;top:10px" width="27" height="22" viewBox="0 0 27 22"><path d="M10.5 2.5H9Q5 2.5 5 6.5V8.5Q5 10.9 1.2 10.9Q5 10.9 5 13.3V15.5Q5 19.5 9 19.5H10.5M16 2.5H17.5Q21.5 2.5 21.5 6.5V8.5Q21.5 10.9 25.3 10.9Q21.5 10.9 21.5 13.3V15.5Q21.5 19.5 17.5 19.5H16" stroke="#fff" stroke-width="2.7" fill="none"/><rect x="12.3" y="5.1" width="3.2" height="3.7" fill="#fff"/><path d="M12.2 11.1H15.5L14.2 18H11.3Z" fill="#fff"/></svg><span class="nt">AdvancedSec<span style="letter-spacing:-1.5px">...</span></span></div>
<div class="nr" style="left:0;top:840px;width:230px;background:#292a2d"><svg style="position:absolute;left:10.5px;top:10px" width="27" height="22" viewBox="0 0 27 22"><path d="M10.5 2.5H9Q5 2.5 5 6.5V8.5Q5 10.9 1.2 10.9Q5 10.9 5 13.3V15.5Q5 19.5 9 19.5H10.5M16 2.5H17.5Q21.5 2.5 21.5 6.5V8.5Q21.5 10.9 25.3 10.9Q21.5 10.9 21.5 13.3V15.5Q21.5 19.5 17.5 19.5H16" stroke="#fff" stroke-width="2.7" fill="none"/><rect x="12.3" y="5.1" width="3.2" height="3.7" fill="#fff"/><path d="M12.2 11.1H15.5L14.2 18H11.3Z" fill="#fff"/></svg><span class="nt">AdvancedSec<span style="letter-spacing:-1.5px">...</span></span></div>
<div class="nr" style="left:0;top:882px;width:230px;background:#1f1f1f"><svg style="position:absolute;left:10.5px;top:10px" width="27" height="22" viewBox="0 0 27 22"><path d="M10.5 2.5H9Q5 2.5 5 6.5V8.5Q5 10.9 1.2 10.9Q5 10.9 5 13.3V15.5Q5 19.5 9 19.5H10.5M16 2.5H17.5Q21.5 2.5 21.5 6.5V8.5Q21.5 10.9 25.3 10.9Q21.5 10.9 21.5 13.3V15.5Q21.5 19.5 17.5 19.5H16" stroke="#fff" stroke-width="2.7" fill="none"/><rect x="12.3" y="5.1" width="3.2" height="3.7" fill="#fff"/><path d="M12.2 11.1H15.5L14.2 18H11.3Z" fill="#fff"/></svg><span class="nt">GenericInfo</span></div>
<div class="nr" style="left:0;top:924px;width:230px;background:#292a2d"><svg style="position:absolute;left:10.5px;top:10px" width="27" height="22" viewBox="0 0 27 22"><path d="M10.5 2.5H9Q5 2.5 5 6.5V8.5Q5 10.9 1.2 10.9Q5 10.9 5 13.3V15.5Q5 19.5 9 19.5H10.5M16 2.5H17.5Q21.5 2.5 21.5 6.5V8.5Q21.5 10.9 25.3 10.9Q21.5 10.9 21.5 13.3V15.5Q21.5 19.5 17.5 19.5H16" stroke="#fff" stroke-width="2.7" fill="none"/><rect x="12.3" y="5.1" width="3.2" height="3.7" fill="#fff"/><path d="M12.2 11.1H15.5L14.2 18H11.3Z" fill="#fff"/></svg><span class="nt">AdvancedSec<span style="letter-spacing:-1.5px">...</span></span></div>
</div>
<div class="redbox" style="left:3px;top:613px;width:214px;height:50px"></div>
<div class="d" style="left:12px;top:1270.5px;width:261px;height:1.5px;background:#5c5c5c"></div>
<div class="d" style="left:12px;top:1272px;width:261px;height:52px;background:#282828;overflow:hidden"><span class="d" style="left:21px;top:13px;font-size:24.5px;line-height:30px;color:#c7c7c7">52 次请求</span><span class="d" style="left:148px;top:12.5px;font-size:25.5px;line-height:30px;color:#c7c7c7">已传输93.0 kB</span></div>
<div class="d" style="left:274px;top:273px;width:634px;height:53px;background:#3c3c3c"></div>
<div class="d" style="left:274px;top:326px;width:634px;height:2px;background:#5c5c5c"></div>
<svg class="d" style="left:300px;top:286px" width="28" height="28" viewBox="0 0 28 28"><path d="M2 2L26 26M26 2L2 26" stroke="#c8c8c8" stroke-width="1.8"/></svg>
<div class="d" style="left:521.5px;top:278px;width:88px;height:50px;background:#262626;border-radius:6px 6px 0 0"></div>
<div class="d" style="left:521.5px;top:323.5px;width:88px;height:4px;background:#a8c7fa;border-radius:3px 3px 0 0"></div>
<span class="d" style="left:366px;top:292px;font-size:24px;line-height:28px;color:#a8a8a8">标头</span>
<span class="d" style="left:454px;top:292px;font-size:24px;line-height:28px;color:#a8a8a8">负载</span>
<span class="d" style="left:542px;top:292px;font-size:24px;line-height:28px;color:#a8c7fa">预览</span>
<span class="d" style="left:631px;top:292px;font-size:24px;line-height:28px;color:#a8a8a8">响应</span>
<span class="d" style="left:718.5px;top:292px;font-size:24px;line-height:28px;color:#a8a8a8">发起程序</span>
<svg class="d" style="left:854px;top:287px" width="24" height="26" viewBox="0 0 24 26"><path d="M2 2L12 13L2 24M11 2L21 13L11 24" stroke="#c8c8c8" stroke-width="1.8" fill="none"/></svg>
<div class="d" style="left:274px;top:328px;width:634px;height:965px;overflow:hidden">
<svg class="tri" style="left:23px;top:18.0px" viewBox="0 0 14 18"><path d="M2.5 2.5L12 9L2.5 15.5Z" fill="#c4c4c4" stroke="#c4c4c4" stroke-width="1.6" stroke-linejoin="round"/></svg>
<span class="jl" style="left:49px;top:14.5px"><span style="color:#e3e3e3">{TotalCount: 11,…}</span></span>
<svg class="tri" style="left:47px;top:50.0px" viewBox="0 0 14 18"><path d="M2.5 2.5L12 9L2.5 15.5Z" fill="#c4c4c4" stroke="#c4c4c4" stroke-width="1.6" stroke-linejoin="round"/></svg>
<span class="jl" style="left:73px;top:46.5px"><span class="k">List</span>: [{Level: "Major", ID: "11", SensorName: "FAN3 Presence"}]</span>
<svg class="tri" style="left:71px;top:82.0px" viewBox="0 0 14 18"><path d="M2.5 2.5L12 9L2.5 15.5Z" fill="#c4c4c4" stroke="#c4c4c4" stroke-width="1.6" stroke-linejoin="round"/></svg>
<span class="jl" style="left:97px;top:78.5px"><span class="k">0</span>: {Level: "Major", ID: "11", SensorName: "FAN3 Presence"}</span>
<svg class="tri" style="left:71px;top:114.0px" viewBox="0 0 14 18"><path d="M2.5 2.5L12 9L2.5 15.5Z" fill="#c4c4c4" stroke="#c4c4c4" stroke-width="1.6" stroke-linejoin="round"/></svg>
<span class="jl" style="left:97px;top:110.5px"><span class="k">1</span>: {Level: "Informational", ID: "10", SensorName: "SysRestart"}</span>
<svg class="tri" style="left:71px;top:146.0px" viewBox="0 0 14 18"><path d="M2.5 2.5L12 9L2.5 15.5Z" fill="#c4c4c4" stroke="#c4c4c4" stroke-width="1.6" stroke-linejoin="round"/></svg>
<span class="jl" style="left:97px;top:142.5px"><span class="k">2</span>: {Level: "Informational", ID: "9", SensorName: "ACPI State"}</span>
<svg class="tri" style="left:71px;top:178.0px" viewBox="0 0 14 18"><path d="M2.5 2.5L12 9L2.5 15.5Z" fill="#c4c4c4" stroke="#c4c4c4" stroke-width="1.6" stroke-linejoin="round"/></svg>
<span class="jl" style="left:97px;top:174.5px"><span class="k">3</span>: {Level: "Informational", ID: "8", SensorName: "DIMM010"}</span>
<svg class="tri" style="left:71px;top:210.0px" viewBox="0 0 14 18"><path d="M2.5 2.5L12 9L2.5 15.5Z" fill="#c4c4c4" stroke="#c4c4c4" stroke-width="1.6" stroke-linejoin="round"/></svg>
<span class="jl" style="left:97px;top:206.5px"><span class="k">4</span>: {Level: "Informational", ID: "7", SensorName: "DIMM110"}</span>
<svg class="tri" style="left:71px;top:242.0px" viewBox="0 0 14 18"><path d="M2.5 2.5L12 9L2.5 15.5Z" fill="#c4c4c4" stroke="#c4c4c4" stroke-width="1.6" stroke-linejoin="round"/></svg>
<span class="jl" style="left:97px;top:238.5px"><span class="k">5</span>: {Level: "Informational", ID: "6", SensorName: "ACPI State"}</span>
<svg class="tri" style="left:71px;top:274.0px" viewBox="0 0 14 18"><path d="M2.5 2.5L12 9L2.5 15.5Z" fill="#c4c4c4" stroke="#c4c4c4" stroke-width="1.6" stroke-linejoin="round"/></svg>
<span class="jl" style="left:97px;top:270.5px"><span class="k">6</span>: {Level: "Major", ID: "5", SensorName: "FAN3 Presence"}</span>
<svg class="tri" style="left:71px;top:306.0px" viewBox="0 0 14 18"><path d="M2.5 2.5L12 9L2.5 15.5Z" fill="#c4c4c4" stroke="#c4c4c4" stroke-width="1.6" stroke-linejoin="round"/></svg>
<span class="jl" style="left:97px;top:302.5px"><span class="k">7</span>: {Level: "Major", ID: "4", SensorName: "FAN3 Presence"}</span>
<svg class="tri" style="left:71px;top:338.0px" viewBox="0 0 14 18"><path d="M2.5 2.5L12 9L2.5 15.5Z" fill="#c4c4c4" stroke="#c4c4c4" stroke-width="1.6" stroke-linejoin="round"/></svg>
<span class="jl" style="left:97px;top:334.5px"><span class="k">8</span>: {Level: "Informational", ID: "3", SensorName: "SysRestart"}</span>
<svg class="tri" style="left:71px;top:370.0px" viewBox="0 0 14 18"><path d="M2.5 2.5L12 9L2.5 15.5Z" fill="#c4c4c4" stroke="#c4c4c4" stroke-width="1.6" stroke-linejoin="round"/></svg>
<span class="jl" style="left:97px;top:366.5px"><span class="k">9</span>: {Level: "Informational", ID: "2", SensorName: "ACPI State"}</span>
<span class="jl" style="left:73px;top:398.5px"><span class="k">TotalCount</span>: <span class="p">11</span></span>
</div>
<div class="redbox" style="left:333px;top:717px;width:252px;height:56px"></div>
<div class="d" style="left:274px;top:1294px;width:634px;height:30px;background:#2b2b2b"></div>
<svg class="d" style="left:288px;top:1298px" width="18" height="22" viewBox="0 0 18 22"><path d="M15 3L3 11L15 19Z" fill="#a0a0a0" stroke="#a0a0a0" stroke-width="2.5" stroke-linejoin="round"/></svg>
<div class="d" style="left:320px;top:1300px;width:245px;height:18px;background:#a0a0a0;border-radius:9px"></div>
<svg class="d" style="left:876px;top:1298px" width="18" height="22" viewBox="0 0 18 22"><path d="M3 3L15 11L3 19Z" fill="#a0a0a0" stroke="#a0a0a0" stroke-width="2.5" stroke-linejoin="round"/></svg>
<div class="d" style="left:12px;top:1324px;width:896px;height:2px;background:#5c5c5c"></div>
<div class="d" style="left:12px;top:1326px;width:896px;height:23px;background:#3c3c3c"></div>
<div class="d" style="left:12px;top:1330px;width:112px;height:19px;background:#262626;border-radius:6px 6px 0 0"></div>
<div class="d" style="left:242px;top:1338px;width:1.5px;height:11px;background:#c8c8c8"></div>
<span class="d" style="left:33px;top:1344px;font-size:24px;line-height:28px;color:#a8c7fa">控制台</span>
<span class="d" style="left:143px;top:1344px;font-size:24px;line-height:28px;color:#c8c8c8">问题</span>
<div class="d" style="left:818px;top:1340px;width:16px;height:14px;border:1.5px dashed #c8c8c8"></div>
<div class="d" style="left:856px;top:1340px;width:32px;height:14px;border:1.8px solid #c8c8c8;border-radius:3px"></div>
</div>
</body></html>
